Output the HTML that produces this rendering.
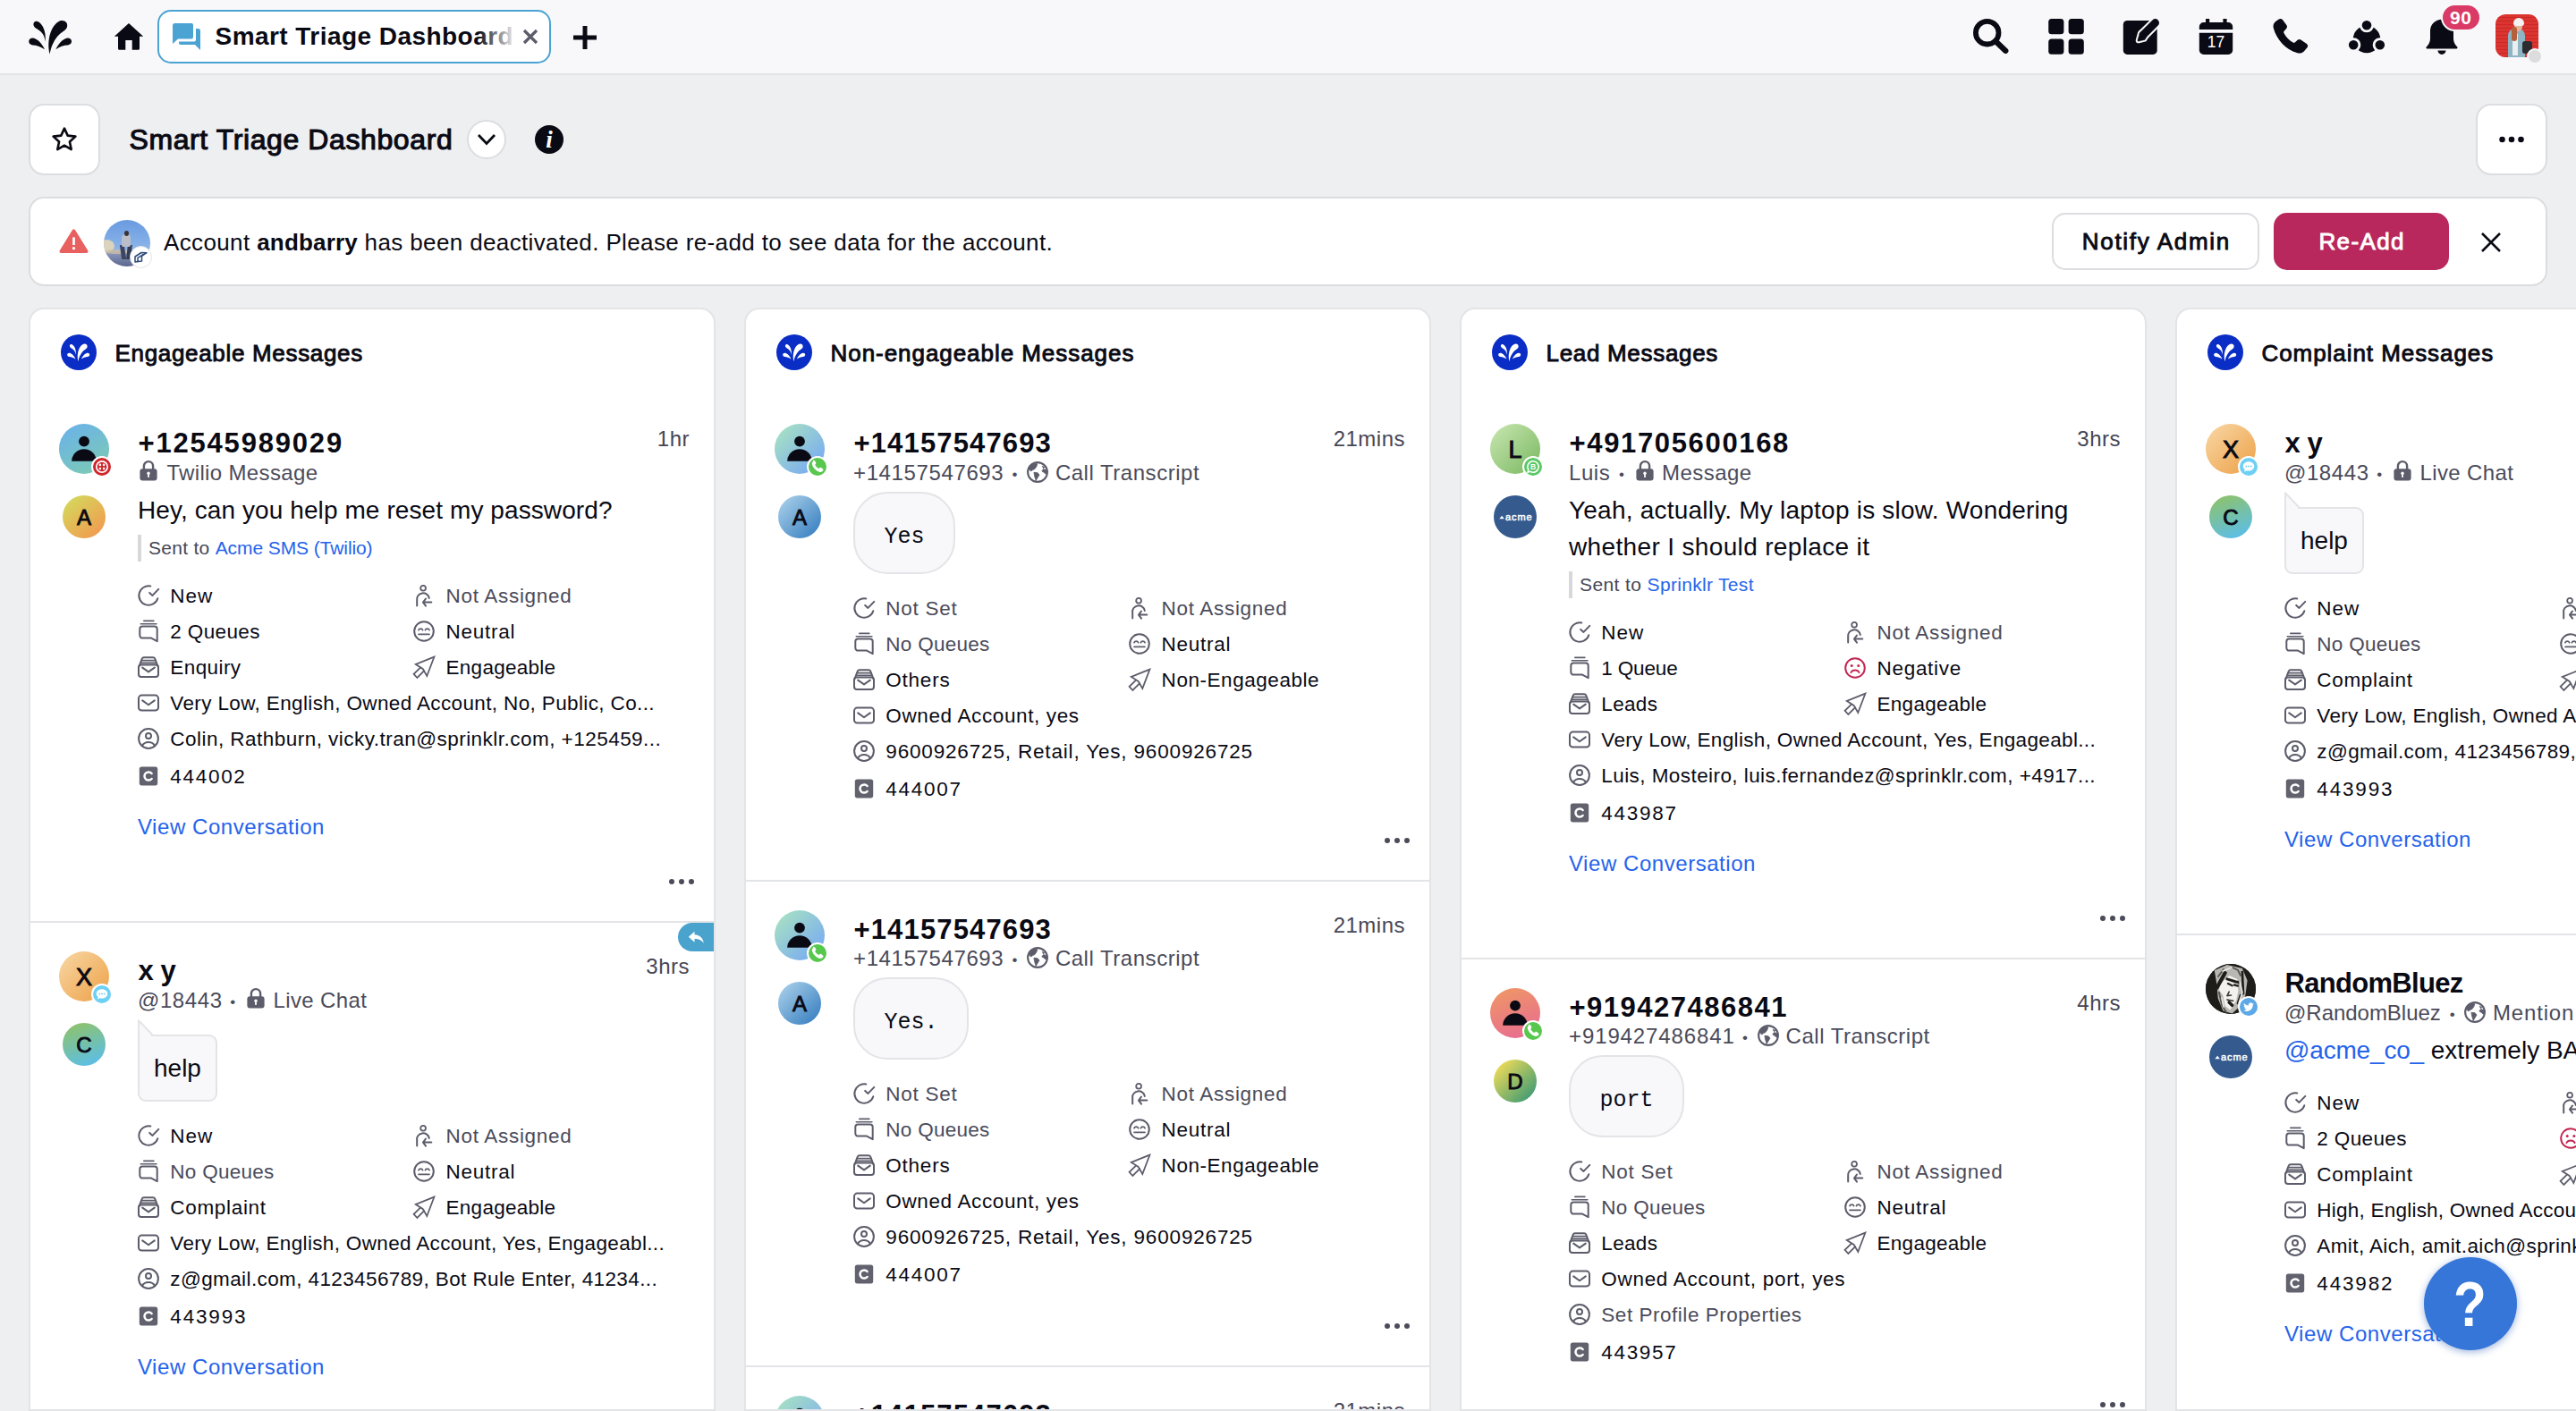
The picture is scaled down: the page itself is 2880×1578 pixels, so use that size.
<!DOCTYPE html>
<html lang="en"><head><meta charset="utf-8"><title>Smart Triage Dashboard</title>
<style>
*{box-sizing:border-box;margin:0;padding:0}
html,body{width:2880px;height:1578px;overflow:hidden}
body{position:relative;background:#eeeff1;font-family:"Liberation Sans",sans-serif;color:#0a0a14;-webkit-font-smoothing:antialiased}
svg{display:block;overflow:visible}
.abs{position:absolute}
#top{position:absolute;left:0;top:0;width:2880px;height:84px;background:#f8f8fa;border-bottom:2px solid #e3e4e7}
#tab{position:absolute;left:176px;top:11px;width:440px;height:60px;border:2px solid #4ba3d3;border-radius:15px;background:#fff}
#tab .t{position:absolute;left:62.5px;top:0;line-height:56px;font-size:28px;font-weight:bold;white-space:nowrap;width:336px;overflow:hidden;letter-spacing:.45px}
#tab .fade{position:absolute;left:356px;top:4px;width:42px;height:48px;background:linear-gradient(90deg,rgba(255,255,255,0),rgba(255,255,255,.95))}
.badge{position:absolute;left:2728.5px;top:3.5px;width:45.5px;height:31px;border-radius:15.5px;background:#d93a66;border:2px solid #f8f8fa;color:#fff;font-size:21px;font-weight:bold;text-align:center;line-height:27px;letter-spacing:.5px}
.sq{position:absolute;width:80px;height:80px;top:116px;background:#fff;border:2px solid #dcdde0;border-radius:17px}
#title{position:absolute;left:144.5px;top:134px;font-size:32px;line-height:44px;white-space:nowrap;-webkit-text-stroke:1.1px #0a0a14;letter-spacing:.6px}
#banner{position:absolute;left:32px;top:220px;width:2816px;height:100px;background:#fff;border:2px solid #dcdde0;border-radius:17px}
#banner .msg{position:absolute;left:149px;top:29px;font-size:26px;line-height:40px;white-space:nowrap;letter-spacing:.37px}
#banner .msg b{letter-spacing:.2px}
.btn{position:absolute;top:16px;height:64px;border-radius:15px;font-size:26px;text-align:center;line-height:60px;-webkit-text-stroke:.9px #0a0a14}
.col{position:absolute;top:344px;width:768px;height:1234px;background:#fff;border:2px solid #e3e4e7;border-radius:17px 17px 0 0;overflow:hidden}
.ch{position:relative;height:96px}
.ch .ic{position:absolute;left:34px;top:28px;width:40px;height:40px;border-radius:50%;background:#0a2dc6}
.ch .tt{position:absolute;left:94.5px;top:31px;font-size:26px;line-height:36px;-webkit-text-stroke:.9px #0a0a14;white-space:nowrap;letter-spacing:-.1px}
.m{position:relative;border-bottom:2px solid #e3e4e7;padding:36px 26px 0 120px}
.av{position:absolute;left:32px;top:32px;width:56px;height:56px;border-radius:50%}
.av b,.a2 b{display:block;text-align:center;font-weight:bold}
.av b{font-size:27px;line-height:59px;font-weight:normal;-webkit-text-stroke:1px #0a0a14}
.a2{position:absolute;left:36px;top:112px;width:48px;height:48px;border-radius:50%;overflow:hidden}
.a2 b{font-size:24px;line-height:49px;font-weight:normal;-webkit-text-stroke:.9px #0a0a14}
.bd{position:absolute;left:36px;top:36px;width:24px;height:24px;border-radius:50%;border:2px solid #fff}
.tm{position:absolute;right:27px;top:33px;font-size:24px;line-height:32px;color:#464655;white-space:nowrap;letter-spacing:.5px}
.nm{font-size:31px;margin-left:.5px;line-height:36px;font-weight:bold;white-space:nowrap;height:36px}
.sb{height:28px;margin-top:1px;font-size:24px;line-height:28px;color:#4b4b5a;white-space:nowrap;position:relative}
.sb span{position:absolute;top:0}
.sb svg{position:absolute}
.tx{margin-top:8px;font-size:28px;line-height:40px;white-space:nowrap}
.tx a,.st a,.vc{color:#2563eb}
.st{margin-top:7px;height:30px;border-left:4px solid #d8d8db;padding-left:8px;font-size:21px;line-height:30px;color:#464655;white-space:nowrap;letter-spacing:.5px}
.bb{margin-top:7px;height:92px;position:relative}
.bb .r{position:absolute;left:0;top:0;height:92px;border:2px solid #e3e4e7;background:#f8f8fa;border-radius:38px;padding:3px 32.5px 0;font-family:"Liberation Mono",monospace;font-size:25px;line-height:91.4px}
.bb .h{position:absolute;left:0;top:16.5px;height:75px;border:2px solid #e3e4e7;background:#f8f8fa;border-radius:0 9px 9px 9px;padding:0 16px;font-size:28px;line-height:71px}
.pr{margin-top:18px}
.rw{height:40px;position:relative}
.rw span{position:absolute;top:.5px;left:36.3px;font-size:22.5px;line-height:40px;white-space:nowrap}
.rw span.r{left:344.6px}
.rw svg{position:absolute;left:0;top:8px}
.rw svg.r{left:308px}
.g{color:#4b4b5a}
.vc{margin-top:20.5px;font-size:24px;line-height:32px;height:32px;letter-spacing:.55px}
.dt{position:absolute;right:22px;bottom:40.5px;width:28.5px;height:7px}
.dt i,.dt:before,.dt:after{content:"";position:absolute;top:0;width:6.5px;height:6.5px;border-radius:50%;background:#4b4b5a}
.dt i{left:11px}.dt:before{left:0}.dt:after{left:22px}
#help{position:absolute;left:2710px;top:1406px;width:104px;height:104px;border-radius:50%;background:#3576d8;box-shadow:0 2px 8px rgba(40,90,180,.45);color:#fff;font-size:70px;font-weight:bold;text-align:center;line-height:106px;padding-right:2px}
#help span{display:inline-block;transform:scaleX(.86)}
</style></head>
<body>
<div id="top"><svg style="position:absolute;left:31.8px;top:21.5px" width="48.4" height="38.5" viewBox="0 0 48.4 38.5"><path d="M23.7 38.5C20.5 27 23 9 33 2.500C38.500 -1 44.500 2.500 43 8.200C42 12 36.500 13.500 32 19C28 24 24.800 31 23.700 38.500zM18.600 24.800C18 16 13 12.500 9.300 10.300C5.500 8.500 4 4 7 2.200C10 .5 13.500 3.500 16 8C18.500 12.800 19.300 19 18.600 24.800zM18 33.200C13.500 29.800 8.500 28.600 4.500 28.400C.5 28-1 24 1.500 21.500C4 19.300 8 20.800 11 23.600C14 26.400 16.500 30 18 33.200zM30.400 33.200C34.500 29.800 39.500 28.600 43.800 28.400C47.800 28 49.300 24 46.800 21.500C44.300 19.300 40.300 20.800 37.300 23.600C34.300 26.400 31.800 30 30.400 33.200z" fill="#0a0a14"/></svg><svg class="abs" style="left:127px;top:25px" width="34" height="32" viewBox="0 0 34 32"><path d="M17 1.100L33.200 15.700H29v13.600a1.500 1.500 0 0 1-1.500 1.500H20.700V20.100H13.300V30.800H6.500A1.500 1.500 0 0 1 5 29.300V15.700H.8z" fill="#0a0a14"/></svg><div id="tab"><svg class="abs" style="left:15px;top:13px" width="31" height="30" viewBox="0 0 31 30"><path d="M2.500 0H21a2 2 0 0 1 2 2v13.500a2 2 0 0 1-2 2H6L0 23V2.500A2.500 2.500 0 0 1 2.500 0z" fill="#4ba3d3"/><path d="M26 6h2.500A2.500 2.500 0 0 1 31 8.500V30l-6-6H9a2 2 0 0 1-2-2v-1.500h17a2 2 0 0 0 2-2z" fill="#4ba3d3"/></svg><div class="t">Smart Triage Dashboard</div><div class="fade"></div><svg class="abs" style="left:406px;top:19px" width="18" height="18" viewBox="0 0 18 18"><path d="M2 2l14 14M16 2L2 16" stroke="#5c5c6b" stroke-width="3.200"/></svg></div><svg class="abs" style="left:640px;top:28px" width="28" height="28" viewBox="0 0 28 28"><path d="M14 1v26M1 14h26" stroke="#0a0a14" stroke-width="5"/></svg><svg class="abs" style="left:2206px;top:21px" width="40" height="40" viewBox="0 0 40 40"><circle cx="15.700" cy="15.700" r="12.800" fill="none" stroke="#0a0a14" stroke-width="5.800"/><path d="M25 25l11.200 10.700" stroke="#0a0a14" stroke-width="6.400" stroke-linecap="round"/></svg><svg class="abs" style="left:2290px;top:21px" width="40" height="40" viewBox="0 0 40 40" fill="#0a0a14"><rect x=".2" y="0" width="17.200" height="17.200" rx="3.500"/><rect x="22.600" y="0" width="17.200" height="17.200" rx="3.500"/><rect x=".2" y="22.500" width="17.200" height="17.300" rx="3.500"/><rect x="22.600" y="22.500" width="17.200" height="17.300" rx="3.500"/></svg><svg class="abs" style="left:2374px;top:20px" width="42" height="42" viewBox="0 0 42 42"><rect x="-.2" y="3" width="37.900" height="37.900" rx="4.500" fill="#0a0a14"/><path d="M35.600 5.500L22.500 18.600" fill="none" stroke="#f8f8fa" stroke-width="12.800" stroke-linecap="round"/><path d="M19.400 15.500l-1.300 1.700-2.200 7.800q-.2 1.400 1.300 1.100l6.800-1.700 1.600-2.700z" fill="#f8f8fa" stroke="#f8f8fa" stroke-width="4.400" stroke-linejoin="round"/><path d="M35.600 5.500L22.500 18.600" fill="none" stroke="#0a0a14" stroke-width="8.800" stroke-linecap="round"/><path d="M19.400 15.500l-1.300 1.700-2.200 7.800q-.2 1.400 1.300 1.100l6.800-1.700 1.600-2.700z" fill="#0a0a14" stroke="#0a0a14" stroke-width=".4" stroke-linejoin="round"/></svg><svg class="abs" style="left:2458px;top:21px" width="40" height="40" viewBox="0 0 40 40"><path d="M5.800 4h27.400a5 5 0 0 1 5 5v3H.8V9a5 5 0 0 1 5-5zM.8 15.800h37.400V35a5 5 0 0 1-5 5H5.800a5 5 0 0 1-5-5z" fill="#0a0a14"/><rect x="8" y="0" width="4.200" height="6" fill="#0a0a14"/><rect x="27.400" y="0" width="4.200" height="6" fill="#0a0a14"/><text x="19.600" y="32.200" font-family="Liberation Sans, sans-serif" font-size="17.500" fill="#fff" text-anchor="middle">17</text></svg><svg class="abs" style="left:2541px;top:20px" width="42.500" height="43.500" viewBox="0 0 41 42"><path d="M6.500 1.500c1.300-1 3-.8 4 .5l4.300 5.800c.9 1.200.8 2.800-.2 3.900l-2.300 2.500c-.6.600-.7 1.500-.3 2.300 2.300 4.300 5.600 7.700 9.800 10.100.8.400 1.700.3 2.300-.3l2.600-2.300c1.100-1 2.700-1 3.900-.2l6 4.200c1.400 1 1.600 2.900.5 4.200l-3.300 3.700c-1.800 2-4.600 2.800-7.200 2C13.300 33.800 3.900 23 .7 10.800c-.6-2.400.2-5 2.100-6.600z" fill="#0a0a14"/></svg><svg class="abs" style="left:2624px;top:20px" width="44" height="42" viewBox="0 0 44 42"><circle cx="22" cy="24" r="15.300" fill="#0a0a14"/><g fill="#0a0a14" stroke="#f8f8fa" stroke-width="2.800"><circle cx="22" cy="8.200" r="6.700"/><circle cx="7.200" cy="30.300" r="6.700"/><circle cx="36.800" cy="30.300" r="6.700"/></g></svg><svg class="abs" style="left:2712px;top:21px" width="36" height="41" viewBox="0 0 36 41"><path d="M18 .8c7.200 0 13 5.600 13 12.800v8.600c0 3.400 1.600 6.600 4.300 9.300.5.500.2 1.900-.9 1.900H1.600c-1.100 0-1.400-1.400-.9-1.900C3.400 28.800 5 25.600 5 22.200v-8.600C5 6.400 10.800.8 18 .8z" fill="#0a0a14"/><path d="M13.500 35.400h9a4.500 4.500 0 0 1-9 0z" fill="#0a0a14"/></svg><div class="badge">90</div><div class="abs" style="left:2790px;top:16px;width:48px;height:48px;border-radius:11px;overflow:hidden;background:repeating-linear-gradient(180deg,#dc352f 0 3px,#c9282a 3px 4px)"><div class="abs" style="left:14px;top:16px;width:19px;height:34px;border-radius:8px 8px 3px 3px;background:#8fb4c4"></div><div class="abs" style="left:19px;top:22px;width:6px;height:24px;background:#e9eef0"></div><div class="abs" style="left:30px;top:30px;width:11px;height:14px;border-radius:3px;background:#2b2b30"></div><div class="abs" style="left:21px;top:9px;width:9px;height:10px;border-radius:50%;background:#e3b39a"></div><div class="abs" style="left:20px;top:4px;width:12px;height:9px;border-radius:6px 6px 3px 3px;background:#f2f2f2"></div><div class="abs" style="left:18px;top:14px;width:6px;height:16px;border-radius:3px;background:#b5603a"></div></div><div class="abs" style="left:2825px;top:54px;width:18px;height:18px;border-radius:50%;background:#dcdcdc;border:2.500px solid #f8f8fa"></div></div>
<div class="sq" style="left:32px"><svg class="abs" style="left:23px;top:23px" width="30" height="30" viewBox="0 0 30 30"><path d="M15 2.600l3.700 8 8.700 1-6.500 5.900 1.800 8.600L15 21.700l-7.700 4.400 1.800-8.600L2.600 11.600l8.700-1z" fill="none" stroke="#0a0a14" stroke-width="2.600" stroke-linejoin="round"/></svg></div><div id="title">Smart Triage Dashboard</div><div class="abs" style="left:522px;top:134px;width:44px;height:44px;border-radius:50%;background:#fff;border:2px solid #dcdde0"><svg class="abs" style="left:9px;top:13px" width="22" height="14" viewBox="0 0 22 14"><path d="M2 2l9 9.500L20 2" fill="none" stroke="#0a0a14" stroke-width="2.800"/></svg></div><div class="abs" style="left:598px;top:140px;width:32px;height:32px;border-radius:50%;background:#0a0a14;color:#fff;font-family:'Liberation Serif',serif;font-style:italic;font-weight:bold;font-size:27px;line-height:32px;text-align:center">i</div><div class="sq" style="left:2768px"><svg class="abs" style="left:24px;top:34px" width="28" height="8" viewBox="0 0 28 8" fill="#0a0a14"><circle cx="3.500" cy="4" r="3.300"/><circle cx="14" cy="4" r="3.300"/><circle cx="24.500" cy="4" r="3.300"/></svg></div>
<div id="banner"><svg class="abs" style="left:32px;top:34px" width="33" height="27.400" viewBox="0 0 36 31" preserveAspectRatio="none"><path d="M18 2.500L33.500 28.500H2.500z" fill="#e8605f" stroke="#e8605f" stroke-width="4" stroke-linejoin="round"/><rect x="16.500" y="10.500" width="3" height="10" rx="1" fill="#fff"/><circle cx="18" cy="24.500" r="1.800" fill="#fff"/></svg><div class="abs" style="left:82px;top:24px;width:52px;height:52px;border-radius:50%;overflow:hidden;background:linear-gradient(180deg,#6a9be0 0,#84b0e8 50%,#90b4e4 62%,#8c98bc 70%,#5c668e 100%)"><div class="abs" style="left:-6px;top:22px;width:18px;height:14px;border-radius:50%;background:#ead9b4;opacity:.85"></div><div class="abs" style="left:0;top:33px;width:30px;height:5px;border-radius:50%;background:#cdbfa8;opacity:.8"></div><div class="abs" style="left:19px;top:28px;width:5px;height:16px;background:#3c4662;transform:skewX(8deg)"></div><div class="abs" style="left:26px;top:28px;width:5px;height:16px;background:#343d58;transform:skewX(-6deg)"></div><div class="abs" style="left:20px;top:16px;width:10px;height:14px;border-radius:4px 4px 2px 2px;background:#b9bec9"></div><div class="abs" style="left:22.500px;top:11.500px;width:5.500px;height:6.500px;border-radius:50%;background:#3a3434"></div></div><div class="abs" style="left:111px;top:53px;width:25px;height:25px;border-radius:50%;background:#fff;border:1px solid #e3e4e7"><svg class="abs" style="left:4px;top:5px" width="15" height="13" viewBox="0 0 15 13"><path d="M1 12V6l7-4.500 6 .2-5.500 3.600V11zM4 11.500V7.300l6.500-4" fill="none" stroke="#2d4a7a" stroke-width="1.500" stroke-linejoin="round"/></svg></div><div class="msg">Account <b>andbarry</b> has been deactivated. Please re-add to see data for the account.</div><div class="btn" style="left:2260px;width:232px;border:2px solid #dcdde0;background:#fff;letter-spacing:1.67px;text-indent:1.67px">Notify Admin</div><div class="btn" style="left:2508px;width:196px;background:#b8285c;color:#fff;line-height:64px;-webkit-text-stroke:.9px #fff;letter-spacing:1.39px;text-indent:1.39px">Re-Add</div><svg class="abs" style="left:2739px;top:37px" width="24" height="24" viewBox="0 0 24 24"><path d="M2 2l20 20M22 2L2 22" stroke="#0a0a14" stroke-width="2.600"/></svg></div>
<div class="col" style="left:32px"><div class="ch"><div class="ic"><svg style="position:absolute;left:7.300px;top:9.800px" width="25.4" height="20.2" viewBox="0 0 48.4 38.5"><path d="M23.7 38.5C20.5 27 23 9 33 2.500C38.500 -1 44.500 2.500 43 8.200C42 12 36.500 13.500 32 19C28 24 24.800 31 23.700 38.500zM18.600 24.800C18 16 13 12.500 9.300 10.300C5.500 8.500 4 4 7 2.200C10 .5 13.500 3.500 16 8C18.500 12.800 19.300 19 18.600 24.800zM18 33.200C13.500 29.800 8.500 28.600 4.500 28.400C.5 28-1 24 1.500 21.500C4 19.300 8 20.800 11 23.600C14 26.400 16.500 30 18 33.200zM30.400 33.200C34.500 29.800 39.500 28.600 43.800 28.400C47.800 28 49.300 24 46.800 21.500C44.300 19.300 40.300 20.800 37.300 23.600C34.300 26.400 31.800 30 30.400 33.200z" fill="#fff"/></svg></div><div class="tt" style="letter-spacing:0.68px">Engageable Messages</div></div>
<div class="m" style="height:590px"><div class="av" style="background:linear-gradient(150deg,#6bb3e6 10%,#7ccab6 90%)"><svg width="56" height="56" viewBox="0 0 56 56"><circle cx="28" cy="19.600" r="5.900" fill="#0a0a14"/><path d="M14.200 41.700a13.800 13.500 0 0 1 27.600 0z" fill="#0a0a14"/></svg><div class="bd" style="background:#cf272d"><svg width="20" height="20" viewBox="0 0 20 20"><circle cx="10" cy="10" r="6.200" fill="none" stroke="#fff" stroke-width="1.700"/><g fill="#fff"><circle cx="7.900" cy="7.900" r="1.300"/><circle cx="12.100" cy="7.900" r="1.300"/><circle cx="7.900" cy="12.100" r="1.300"/><circle cx="12.100" cy="12.100" r="1.300"/></g></svg></div></div><div class="a2" style="background:linear-gradient(140deg,#d4d85c 10%,#f29a50 90%)"><b>A</b></div><div class="tm">1hr</div><div class="nm"><span style="letter-spacing:1.81px;">+12545989029</span></div><div class="sb"><svg style="left:2.3px;top:0px" width="20" height="23" viewBox="0 0 20 23"><path d="M4.9 10V6.2a5.1 5.1 0 0 1 10.2 0V10" fill="none" stroke="#5c5c6b" stroke-width="2.4"/><rect x=".4" y="9.2" width="19.2" height="13.4" rx="3" fill="#5c5c6b"/><circle cx="10" cy="14.3" r="1.7" fill="#fff"/><rect x="9.1" y="14.5" width="1.8" height="4.4" fill="#fff"/></svg><span style="letter-spacing:0.35px;left:32.4px">Twilio Message</span></div><div class="tx"><span style="letter-spacing:0.09px;">Hey, can you help me reset my password?</span></div><div class="st"><span style="letter-spacing:0.29px">Sent to </span><a style="letter-spacing:-0.09px">Acme SMS (Twilio)</a></div><div class="pr"><div class="rw"><svg width="24" height="24" viewBox="0 0 24 24" fill="none" stroke="#5c5c6b" stroke-width="2" stroke-linecap="round" stroke-linejoin="round"><path d="M14.3 1.6A10.7 10.7 0 1 0 22.3 15.2"/><path d="M13.2 8.9l3.3 3 6.8-7"/></svg><span style="letter-spacing:0.93px;">New</span><svg class="r" width="24" height="24" viewBox="0 0 24 24" fill="none" stroke="#5c5c6b" stroke-width="2" stroke-linecap="round" stroke-linejoin="round"><g transform="translate(0 -.8)"><circle cx="11.1" cy="4.6" r="2.9" stroke-width="1.8"/><path d="M4.2 24.2v-6.600a6.800 6.400 0 0 1 13.600-1.900"/><path d="M20.300 20.400h-9M14 16.300l-3 4.100 3 4"/></g></svg><span class="r g" style="letter-spacing:0.68px;">Not Assigned</span></div><div class="rw"><svg width="24" height="24" viewBox="0 0 24 24" fill="none" stroke="#5c5c6b" stroke-width="2" stroke-linecap="round" stroke-linejoin="round"><path d="M6.8 .4h11.1M3.3 3.8h17.6" stroke-width="1.6"/><path d="M5.3 6.6h13.4a3 3 0 0 1 3 3v13.6l-6.6-3.6H5.3a3 3 0 0 1-3-3V9.6a3 3 0 0 1 3-3z"/></svg><span style="letter-spacing:0.36px;">2 Queues</span><svg class="r" width="24" height="24" viewBox="0 0 24 24" fill="none" stroke="#5c5c6b" stroke-width="2" stroke-linecap="round" stroke-linejoin="round"><circle cx="12" cy="12" r="10.8"/><path d="M6 10.6a2.4 2 0 0 1 4.6 0M13.4 10.6a2.4 2 0 0 1 4.6 0M6 15.3h12" stroke-width="1.7"/></svg><span class="r" style="letter-spacing:0.72px;">Neutral</span></div><div class="rw"><svg width="24" height="24" viewBox="0 0 24 24" fill="none" stroke="#5c5c6b" stroke-width="2" stroke-linecap="round" stroke-linejoin="round"><rect x="1" y="9.6" width="22" height="13.4" rx="3"/><path d="M5.2 12.6l6.8 4.8 6.8-4.8"/><path d="M1.6 11L4.6 3a2.6 2.6 0 0 1 2.4-1.7h10a2.6 2.6 0 0 1 2.4 1.7l3 8"/><path d="M4.3 4.6h15.4M3.2 7.3h17.6" stroke-width="1.7"/></svg><span style="letter-spacing:0.41px;">Enquiry</span><svg class="r" width="24" height="24" viewBox="0 0 24 24" fill="none" stroke="#5c5c6b" stroke-width="2" stroke-linecap="round" stroke-linejoin="round"><path d="M23.400.7L2.800 8.900l7.800 5 4.700 8.100z" stroke-width="1.8" stroke-linejoin="miter"/><path d="M8 12.7L.6 19.8l3.8 4.2 7.8-7.9" stroke-width="1.8" stroke-linejoin="miter"/></svg><span class="r" style="letter-spacing:0.25px;">Engageable</span></div><div class="rw"><svg width="24" height="24" viewBox="0 0 24 24" fill="none" stroke="#5c5c6b" stroke-width="2" stroke-linecap="round" stroke-linejoin="round"><rect x="1" y="3.6" width="22" height="17" rx="3.4"/><path d="M5.2 9.4l6.8 4.9 6.8-4.9"/></svg><span style="letter-spacing:0.37px;">Very Low, English, Owned Account, No, Public, Co...</span></div><div class="rw"><svg width="24" height="24" viewBox="0 0 24 24" fill="none" stroke="#5c5c6b" stroke-width="2" stroke-linecap="round" stroke-linejoin="round"><circle cx="12" cy="12" r="10.9"/><circle cx="12" cy="9" r="3"/><path d="M4.9 20a8 7.4 0 0 1 14.2 0"/></svg><span style="letter-spacing:0.47px;">Colin, Rathburn, vicky.tran@sprinklr.com, +125459...</span></div><div class="rw" style="margin-top:2px"><svg width="24" height="24" viewBox="0 0 24 24" fill="none" stroke="#5c5c6b" stroke-width="2" stroke-linecap="round" stroke-linejoin="round"><rect x="1.8" y="1.6" width="20.4" height="20.8" rx="2.6" fill="#62626f" stroke="none"/><path d="M15.6 9a4.6 4.6 0 1 0 0 6" stroke="#fff" stroke-width="2.5"/></svg><span style="letter-spacing:1.7px;">444002</span></div></div><div class="vc">View Conversation</div><div class="dt"><i></i></div></div>
<div class="m" style="height:604px"><div class="abs" style="right:0;top:0;width:40px;height:32px;border-radius:16px 0 0 16px;background:#4aa3cd"><svg class="abs" style="left:11px;top:9px" width="19" height="15" viewBox="0 0 19 15"><path d="M7.500 .8L.8 6.800l6.700 6V9c4.500 0 7.700 1.200 10.300 4.800C17 8.500 13.800 4.800 7.500 4.300z" fill="#fff"/></svg></div><div class="av" style="background:linear-gradient(135deg,#f7d29c 10%,#eea650 90%)"><b>X</b><div class="bd" style="background:#6fd0f5"><svg width="20" height="20" viewBox="0 0 20 20"><path d="M10 4.300c3.500 0 6.200 2.300 6.200 5.100s-2.700 5.100-6.200 5.100c-.7 0-1.400-.1-2-.3l-3 1.400.8-2.700c-1.200-.9-2-2.100-2-3.500 0-2.800 2.700-5.100 6.200-5.100z" fill="#fff"/><g fill="#6fd0f5"><circle cx="7.300" cy="9.500" r=".9"/><circle cx="10" cy="9.500" r=".9"/><circle cx="12.700" cy="9.500" r=".9"/></g></svg></div></div><div class="a2" style="background:linear-gradient(160deg,#8cc270 10%,#5cbee6 90%)"><b>C</b></div><div class="tm">3hrs</div><div class="nm"><span style="letter-spacing:-0.41px;">x y</span></div><div class="sb"><span style="letter-spacing:0.58px;left:0px">@18443</span><span style="left:103.2px;top:1.900px;font-size:17px">•</span><svg style="left:122.3px;top:0px" width="20" height="23" viewBox="0 0 20 23"><path d="M4.9 10V6.2a5.1 5.1 0 0 1 10.2 0V10" fill="none" stroke="#5c5c6b" stroke-width="2.4"/><rect x=".4" y="9.2" width="19.2" height="13.4" rx="3" fill="#5c5c6b"/><circle cx="10" cy="14.3" r="1.7" fill="#fff"/><rect x="9.1" y="14.5" width="1.8" height="4.4" fill="#fff"/></svg><span style="letter-spacing:0.37px;left:151.5px">Live Chat</span></div><div class="bb"><svg class="abs" style="left:0;top:0" width="20" height="24" viewBox="0 0 20 24"><path d="M1 24V1.300L16.500 17.500" fill="#f8f8fa" stroke="#e3e4e7" stroke-width="2" stroke-linejoin="round"/></svg><div class="h">help</div><div class="abs" style="left:2px;top:16.500px;width:12.500px;height:3px;background:#f8f8fa"></div></div><div class="pr"><div class="rw"><svg width="24" height="24" viewBox="0 0 24 24" fill="none" stroke="#5c5c6b" stroke-width="2" stroke-linecap="round" stroke-linejoin="round"><path d="M14.3 1.6A10.7 10.7 0 1 0 22.3 15.2"/><path d="M13.2 8.9l3.3 3 6.8-7"/></svg><span style="letter-spacing:0.93px;">New</span><svg class="r" width="24" height="24" viewBox="0 0 24 24" fill="none" stroke="#5c5c6b" stroke-width="2" stroke-linecap="round" stroke-linejoin="round"><g transform="translate(0 -.8)"><circle cx="11.1" cy="4.6" r="2.9" stroke-width="1.8"/><path d="M4.2 24.2v-6.600a6.800 6.400 0 0 1 13.600-1.900"/><path d="M20.300 20.400h-9M14 16.300l-3 4.100 3 4"/></g></svg><span class="r g" style="letter-spacing:0.68px;">Not Assigned</span></div><div class="rw"><svg width="24" height="24" viewBox="0 0 24 24" fill="none" stroke="#5c5c6b" stroke-width="2" stroke-linecap="round" stroke-linejoin="round"><path d="M6.8 .4h11.1M3.3 3.8h17.6" stroke-width="1.6"/><path d="M5.3 6.6h13.4a3 3 0 0 1 3 3v13.6l-6.6-3.6H5.3a3 3 0 0 1-3-3V9.6a3 3 0 0 1 3-3z"/></svg><span class="g" style="letter-spacing:0.28px;">No Queues</span><svg class="r" width="24" height="24" viewBox="0 0 24 24" fill="none" stroke="#5c5c6b" stroke-width="2" stroke-linecap="round" stroke-linejoin="round"><circle cx="12" cy="12" r="10.8"/><path d="M6 10.6a2.4 2 0 0 1 4.6 0M13.4 10.6a2.4 2 0 0 1 4.6 0M6 15.3h12" stroke-width="1.7"/></svg><span class="r" style="letter-spacing:0.72px;">Neutral</span></div><div class="rw"><svg width="24" height="24" viewBox="0 0 24 24" fill="none" stroke="#5c5c6b" stroke-width="2" stroke-linecap="round" stroke-linejoin="round"><rect x="1" y="9.6" width="22" height="13.4" rx="3"/><path d="M5.2 12.6l6.8 4.8 6.8-4.8"/><path d="M1.6 11L4.6 3a2.6 2.6 0 0 1 2.4-1.7h10a2.6 2.6 0 0 1 2.4 1.7l3 8"/><path d="M4.3 4.6h15.4M3.2 7.3h17.6" stroke-width="1.7"/></svg><span style="letter-spacing:0.68px;">Complaint</span><svg class="r" width="24" height="24" viewBox="0 0 24 24" fill="none" stroke="#5c5c6b" stroke-width="2" stroke-linecap="round" stroke-linejoin="round"><path d="M23.400.7L2.800 8.900l7.800 5 4.700 8.100z" stroke-width="1.8" stroke-linejoin="miter"/><path d="M8 12.7L.6 19.8l3.8 4.2 7.8-7.9" stroke-width="1.8" stroke-linejoin="miter"/></svg><span class="r" style="letter-spacing:0.25px;">Engageable</span></div><div class="rw"><svg width="24" height="24" viewBox="0 0 24 24" fill="none" stroke="#5c5c6b" stroke-width="2" stroke-linecap="round" stroke-linejoin="round"><rect x="1" y="3.6" width="22" height="17" rx="3.4"/><path d="M5.2 9.4l6.8 4.9 6.8-4.9"/></svg><span style="letter-spacing:0.34px;">Very Low, English, Owned Account, Yes, Engageabl...</span></div><div class="rw"><svg width="24" height="24" viewBox="0 0 24 24" fill="none" stroke="#5c5c6b" stroke-width="2" stroke-linecap="round" stroke-linejoin="round"><circle cx="12" cy="12" r="10.9"/><circle cx="12" cy="9" r="3"/><path d="M4.9 20a8 7.4 0 0 1 14.2 0"/></svg><span style="letter-spacing:0.39px;">z@gmail.com, 4123456789, Bot Rule Enter, 41234...</span></div><div class="rw" style="margin-top:2px"><svg width="24" height="24" viewBox="0 0 24 24" fill="none" stroke="#5c5c6b" stroke-width="2" stroke-linecap="round" stroke-linejoin="round"><rect x="1.8" y="1.6" width="20.4" height="20.8" rx="2.6" fill="#62626f" stroke="none"/><path d="M15.6 9a4.6 4.6 0 1 0 0 6" stroke="#fff" stroke-width="2.5"/></svg><span style="letter-spacing:1.82px;">443993</span></div></div><div class="vc">View Conversation</div><div class="dt"><i></i></div></div>
</div>
<div class="col" style="left:832px"><div class="ch"><div class="ic"><svg style="position:absolute;left:7.300px;top:9.800px" width="25.4" height="20.2" viewBox="0 0 48.4 38.5"><path d="M23.7 38.5C20.5 27 23 9 33 2.500C38.500 -1 44.500 2.500 43 8.200C42 12 36.500 13.500 32 19C28 24 24.800 31 23.700 38.500zM18.600 24.800C18 16 13 12.500 9.300 10.300C5.500 8.500 4 4 7 2.200C10 .5 13.500 3.500 16 8C18.500 12.800 19.300 19 18.600 24.800zM18 33.200C13.500 29.800 8.500 28.600 4.500 28.400C.5 28-1 24 1.500 21.500C4 19.300 8 20.800 11 23.600C14 26.400 16.500 30 18 33.200zM30.400 33.200C34.500 29.800 39.500 28.600 43.800 28.400C47.800 28 49.300 24 46.800 21.500C44.300 19.300 40.300 20.800 37.300 23.600C34.300 26.400 31.800 30 30.400 33.200z" fill="#fff"/></svg></div><div class="tt" style="letter-spacing:0.95px">Non-engageable Messages</div></div>
<div class="m" style="height:544px"><div class="av" style="background:linear-gradient(135deg,#a6e0c4 10%,#78aaf2 90%)"><svg width="56" height="56" viewBox="0 0 56 56"><circle cx="28" cy="19.600" r="5.900" fill="#0a0a14"/><path d="M14.200 41.700a13.800 13.500 0 0 1 27.600 0z" fill="#0a0a14"/></svg><div class="bd" style="background:#58c74e"><svg width="20" height="20" viewBox="0 0 20 20"><path d="M6.300 3.600c.6-.5 1.400-.4 1.800.2l1.300 1.900c.4.500.3 1.200-.1 1.700l-.8.900c1 2 2.300 3.300 4.200 4.300l1-.8c.5-.4 1.200-.5 1.700-.1l1.900 1.300c.6.400.7 1.300.2 1.800l-1 1.100c-.7.700-1.700 1-2.700.7-4.200-1.300-7.300-4.500-8.600-8.600-.3-1 0-2 .7-2.700z" fill="#fff" transform="translate(-1.300 -.6)"/></svg></div></div><div class="a2" style="background:linear-gradient(135deg,#a4cce8 10%,#3c82c2 90%)"><b>A</b></div><div class="tm">21mins</div><div class="nm"><span style="letter-spacing:1.14px;">+14157547693</span></div><div class="sb"><span style="letter-spacing:0.62px;left:0px">+14157547693</span><span style="left:177.6px;top:1.900px;font-size:17px">•</span><svg style="left:193.7px;top:1px" width="24" height="24" viewBox="0 0 24 24"><circle cx="12" cy="12" r="10.900" fill="#fff" stroke="#5c5c6b" stroke-width="2.100"/><path d="M2.300 8.600L4.700 4.400 8.400 2.400l3.400.4-1 3-2 2.800-2.300 1-1.800 1.400zM7.900 12.300l4.200.5 1.900 2.300-2.400 3.800-1.400 2.500-1.400-4.400zM16.800 10.900l1.800-2.300 2.800.9 1.500 1.900-1.500 2.800-2.300-1.900zM17.300 5.300l2.300 1.100-1 1.500z" fill="#5c5c6b" stroke="#5c5c6b" stroke-width=".8" stroke-linejoin="round"/></svg><span style="letter-spacing:0.52px;left:225.9px">Call Transcript</span></div><div class="bb"><div class="r">Yes</div></div><div class="pr"><div class="rw"><svg width="24" height="24" viewBox="0 0 24 24" fill="none" stroke="#5c5c6b" stroke-width="2" stroke-linecap="round" stroke-linejoin="round"><path d="M14.3 1.6A10.7 10.7 0 1 0 22.3 15.2"/><path d="M13.2 8.9l3.3 3 6.8-7"/></svg><span class="g" style="letter-spacing:0.74px;">Not Set</span><svg class="r" width="24" height="24" viewBox="0 0 24 24" fill="none" stroke="#5c5c6b" stroke-width="2" stroke-linecap="round" stroke-linejoin="round"><g transform="translate(0 -.8)"><circle cx="11.1" cy="4.6" r="2.9" stroke-width="1.8"/><path d="M4.2 24.2v-6.600a6.800 6.400 0 0 1 13.600-1.900"/><path d="M20.300 20.400h-9M14 16.300l-3 4.100 3 4"/></g></svg><span class="r g" style="letter-spacing:0.68px;">Not Assigned</span></div><div class="rw"><svg width="24" height="24" viewBox="0 0 24 24" fill="none" stroke="#5c5c6b" stroke-width="2" stroke-linecap="round" stroke-linejoin="round"><path d="M6.8 .4h11.1M3.3 3.8h17.6" stroke-width="1.6"/><path d="M5.3 6.6h13.4a3 3 0 0 1 3 3v13.6l-6.6-3.6H5.3a3 3 0 0 1-3-3V9.6a3 3 0 0 1 3-3z"/></svg><span class="g" style="letter-spacing:0.28px;">No Queues</span><svg class="r" width="24" height="24" viewBox="0 0 24 24" fill="none" stroke="#5c5c6b" stroke-width="2" stroke-linecap="round" stroke-linejoin="round"><circle cx="12" cy="12" r="10.8"/><path d="M6 10.6a2.4 2 0 0 1 4.6 0M13.4 10.6a2.4 2 0 0 1 4.6 0M6 15.3h12" stroke-width="1.7"/></svg><span class="r" style="letter-spacing:0.72px;">Neutral</span></div><div class="rw"><svg width="24" height="24" viewBox="0 0 24 24" fill="none" stroke="#5c5c6b" stroke-width="2" stroke-linecap="round" stroke-linejoin="round"><rect x="1" y="9.6" width="22" height="13.4" rx="3"/><path d="M5.2 12.6l6.8 4.8 6.8-4.8"/><path d="M1.6 11L4.6 3a2.6 2.6 0 0 1 2.4-1.7h10a2.6 2.6 0 0 1 2.4 1.7l3 8"/><path d="M4.3 4.6h15.4M3.2 7.3h17.6" stroke-width="1.7"/></svg><span style="letter-spacing:0.77px;">Others</span><svg class="r" width="24" height="24" viewBox="0 0 24 24" fill="none" stroke="#5c5c6b" stroke-width="2" stroke-linecap="round" stroke-linejoin="round"><path d="M23.400.7L2.800 8.900l7.800 5 4.700 8.100z" stroke-width="1.8" stroke-linejoin="miter"/><path d="M8 12.7L.6 19.8l3.8 4.2 7.8-7.9" stroke-width="1.8" stroke-linejoin="miter"/></svg><span class="r" style="letter-spacing:0.55px;">Non-Engageable</span></div><div class="rw"><svg width="24" height="24" viewBox="0 0 24 24" fill="none" stroke="#5c5c6b" stroke-width="2" stroke-linecap="round" stroke-linejoin="round"><rect x="1" y="3.6" width="22" height="17" rx="3.4"/><path d="M5.2 9.4l6.8 4.9 6.8-4.9"/></svg><span style="letter-spacing:0.63px;">Owned Account, yes</span></div><div class="rw"><svg width="24" height="24" viewBox="0 0 24 24" fill="none" stroke="#5c5c6b" stroke-width="2" stroke-linecap="round" stroke-linejoin="round"><circle cx="12" cy="12" r="10.9"/><circle cx="12" cy="9" r="3"/><path d="M4.9 20a8 7.4 0 0 1 14.2 0"/></svg><span style="letter-spacing:0.83px;">9600926725, Retail, Yes, 9600926725</span></div><div class="rw" style="margin-top:2px"><svg width="24" height="24" viewBox="0 0 24 24" fill="none" stroke="#5c5c6b" stroke-width="2" stroke-linecap="round" stroke-linejoin="round"><rect x="1.8" y="1.6" width="20.4" height="20.8" rx="2.6" fill="#62626f" stroke="none"/><path d="M15.6 9a4.6 4.6 0 1 0 0 6" stroke="#fff" stroke-width="2.5"/></svg><span style="letter-spacing:1.74px;">444007</span></div></div><div class="dt"><i></i></div></div>
<div class="m" style="height:543px"><div class="av" style="background:linear-gradient(135deg,#a6e0c4 10%,#78aaf2 90%)"><svg width="56" height="56" viewBox="0 0 56 56"><circle cx="28" cy="19.600" r="5.900" fill="#0a0a14"/><path d="M14.200 41.700a13.800 13.500 0 0 1 27.600 0z" fill="#0a0a14"/></svg><div class="bd" style="background:#58c74e"><svg width="20" height="20" viewBox="0 0 20 20"><path d="M6.300 3.600c.6-.5 1.400-.4 1.800.2l1.300 1.900c.4.500.3 1.200-.1 1.700l-.8.900c1 2 2.300 3.300 4.200 4.300l1-.8c.5-.4 1.200-.5 1.700-.1l1.900 1.300c.6.400.7 1.300.2 1.800l-1 1.100c-.7.700-1.700 1-2.700.7-4.200-1.300-7.300-4.500-8.600-8.600-.3-1 0-2 .7-2.700z" fill="#fff" transform="translate(-1.300 -.6)"/></svg></div></div><div class="a2" style="background:linear-gradient(135deg,#a4cce8 10%,#3c82c2 90%)"><b>A</b></div><div class="tm">21mins</div><div class="nm"><span style="letter-spacing:1.14px;">+14157547693</span></div><div class="sb" style="margin-top:0px"><span style="letter-spacing:0.62px;left:0px">+14157547693</span><span style="left:177.6px;top:1.900px;font-size:17px">•</span><svg style="left:193.7px;top:1px" width="24" height="24" viewBox="0 0 24 24"><circle cx="12" cy="12" r="10.900" fill="#fff" stroke="#5c5c6b" stroke-width="2.100"/><path d="M2.300 8.600L4.700 4.400 8.400 2.400l3.400.4-1 3-2 2.800-2.300 1-1.800 1.400zM7.900 12.300l4.200.5 1.900 2.300-2.400 3.800-1.400 2.500-1.400-4.400zM16.800 10.900l1.800-2.300 2.800.9 1.500 1.900-1.500 2.800-2.300-1.900zM17.300 5.300l2.300 1.100-1 1.500z" fill="#5c5c6b" stroke="#5c5c6b" stroke-width=".8" stroke-linejoin="round"/></svg><span style="letter-spacing:0.52px;left:225.9px">Call Transcript</span></div><div class="bb"><div class="r">Yes.</div></div><div class="pr"><div class="rw"><svg width="24" height="24" viewBox="0 0 24 24" fill="none" stroke="#5c5c6b" stroke-width="2" stroke-linecap="round" stroke-linejoin="round"><path d="M14.3 1.6A10.7 10.7 0 1 0 22.3 15.2"/><path d="M13.2 8.9l3.3 3 6.8-7"/></svg><span class="g" style="letter-spacing:0.74px;">Not Set</span><svg class="r" width="24" height="24" viewBox="0 0 24 24" fill="none" stroke="#5c5c6b" stroke-width="2" stroke-linecap="round" stroke-linejoin="round"><g transform="translate(0 -.8)"><circle cx="11.1" cy="4.6" r="2.9" stroke-width="1.8"/><path d="M4.2 24.2v-6.600a6.800 6.400 0 0 1 13.600-1.900"/><path d="M20.300 20.400h-9M14 16.300l-3 4.100 3 4"/></g></svg><span class="r g" style="letter-spacing:0.68px;">Not Assigned</span></div><div class="rw"><svg width="24" height="24" viewBox="0 0 24 24" fill="none" stroke="#5c5c6b" stroke-width="2" stroke-linecap="round" stroke-linejoin="round"><path d="M6.8 .4h11.1M3.3 3.8h17.6" stroke-width="1.6"/><path d="M5.3 6.6h13.4a3 3 0 0 1 3 3v13.6l-6.6-3.6H5.3a3 3 0 0 1-3-3V9.6a3 3 0 0 1 3-3z"/></svg><span class="g" style="letter-spacing:0.28px;">No Queues</span><svg class="r" width="24" height="24" viewBox="0 0 24 24" fill="none" stroke="#5c5c6b" stroke-width="2" stroke-linecap="round" stroke-linejoin="round"><circle cx="12" cy="12" r="10.8"/><path d="M6 10.6a2.4 2 0 0 1 4.6 0M13.4 10.6a2.4 2 0 0 1 4.6 0M6 15.3h12" stroke-width="1.7"/></svg><span class="r" style="letter-spacing:0.72px;">Neutral</span></div><div class="rw"><svg width="24" height="24" viewBox="0 0 24 24" fill="none" stroke="#5c5c6b" stroke-width="2" stroke-linecap="round" stroke-linejoin="round"><rect x="1" y="9.6" width="22" height="13.4" rx="3"/><path d="M5.2 12.6l6.8 4.8 6.8-4.8"/><path d="M1.6 11L4.6 3a2.6 2.6 0 0 1 2.4-1.7h10a2.6 2.6 0 0 1 2.4 1.7l3 8"/><path d="M4.3 4.6h15.4M3.2 7.3h17.6" stroke-width="1.7"/></svg><span style="letter-spacing:0.77px;">Others</span><svg class="r" width="24" height="24" viewBox="0 0 24 24" fill="none" stroke="#5c5c6b" stroke-width="2" stroke-linecap="round" stroke-linejoin="round"><path d="M23.400.7L2.800 8.900l7.800 5 4.700 8.100z" stroke-width="1.8" stroke-linejoin="miter"/><path d="M8 12.7L.6 19.8l3.8 4.2 7.8-7.9" stroke-width="1.8" stroke-linejoin="miter"/></svg><span class="r" style="letter-spacing:0.55px;">Non-Engageable</span></div><div class="rw"><svg width="24" height="24" viewBox="0 0 24 24" fill="none" stroke="#5c5c6b" stroke-width="2" stroke-linecap="round" stroke-linejoin="round"><rect x="1" y="3.6" width="22" height="17" rx="3.4"/><path d="M5.2 9.4l6.8 4.9 6.8-4.9"/></svg><span style="letter-spacing:0.63px;">Owned Account, yes</span></div><div class="rw"><svg width="24" height="24" viewBox="0 0 24 24" fill="none" stroke="#5c5c6b" stroke-width="2" stroke-linecap="round" stroke-linejoin="round"><circle cx="12" cy="12" r="10.9"/><circle cx="12" cy="9" r="3"/><path d="M4.9 20a8 7.4 0 0 1 14.2 0"/></svg><span style="letter-spacing:0.83px;">9600926725, Retail, Yes, 9600926725</span></div><div class="rw" style="margin-top:2px"><svg width="24" height="24" viewBox="0 0 24 24" fill="none" stroke="#5c5c6b" stroke-width="2" stroke-linecap="round" stroke-linejoin="round"><rect x="1.8" y="1.6" width="20.4" height="20.8" rx="2.6" fill="#62626f" stroke="none"/><path d="M15.6 9a4.6 4.6 0 1 0 0 6" stroke="#fff" stroke-width="2.5"/></svg><span style="letter-spacing:1.74px;">444007</span></div></div><div class="dt"><i></i></div></div>
<div class="m" style="height:544px"><div class="av" style="background:linear-gradient(135deg,#a6e0c4 10%,#78aaf2 90%)"><svg width="56" height="56" viewBox="0 0 56 56"><circle cx="28" cy="19.600" r="5.900" fill="#0a0a14"/><path d="M14.200 41.700a13.800 13.500 0 0 1 27.600 0z" fill="#0a0a14"/></svg><div class="bd" style="background:#58c74e"><svg width="20" height="20" viewBox="0 0 20 20"><path d="M6.300 3.600c.6-.5 1.400-.4 1.800.2l1.300 1.900c.4.500.3 1.200-.1 1.700l-.8.900c1 2 2.300 3.300 4.200 4.300l1-.8c.5-.4 1.200-.5 1.700-.1l1.900 1.300c.6.400.7 1.300.2 1.800l-1 1.100c-.7.700-1.700 1-2.700.7-4.200-1.300-7.300-4.500-8.600-8.600-.3-1 0-2 .7-2.700z" fill="#fff" transform="translate(-1.300 -.6)"/></svg></div></div><div class="a2" style="background:linear-gradient(135deg,#a4cce8 10%,#3c82c2 90%)"><b>A</b></div><div class="tm">21mins</div><div class="nm"><span style="letter-spacing:1.14px;">+14157547693</span></div><div class="sb"><span style="letter-spacing:0.62px;left:0px">+14157547693</span><span style="left:177.6px;top:1.900px;font-size:17px">•</span><svg style="left:193.7px;top:1px" width="24" height="24" viewBox="0 0 24 24"><circle cx="12" cy="12" r="10.900" fill="#fff" stroke="#5c5c6b" stroke-width="2.100"/><path d="M2.300 8.600L4.700 4.400 8.400 2.400l3.400.4-1 3-2 2.800-2.300 1-1.800 1.400zM7.900 12.300l4.200.5 1.900 2.300-2.400 3.800-1.400 2.500-1.400-4.400zM16.800 10.900l1.800-2.300 2.800.9 1.500 1.900-1.500 2.800-2.300-1.900zM17.300 5.300l2.300 1.100-1 1.500z" fill="#5c5c6b" stroke="#5c5c6b" stroke-width=".8" stroke-linejoin="round"/></svg><span style="letter-spacing:0.52px;left:225.9px">Call Transcript</span></div><div class="bb"><div class="r">Yes</div></div><div class="pr"><div class="rw"><svg width="24" height="24" viewBox="0 0 24 24" fill="none" stroke="#5c5c6b" stroke-width="2" stroke-linecap="round" stroke-linejoin="round"><path d="M14.3 1.6A10.7 10.7 0 1 0 22.3 15.2"/><path d="M13.2 8.9l3.3 3 6.8-7"/></svg><span class="g" style="letter-spacing:0.74px;">Not Set</span><svg class="r" width="24" height="24" viewBox="0 0 24 24" fill="none" stroke="#5c5c6b" stroke-width="2" stroke-linecap="round" stroke-linejoin="round"><g transform="translate(0 -.8)"><circle cx="11.1" cy="4.6" r="2.9" stroke-width="1.8"/><path d="M4.2 24.2v-6.600a6.800 6.400 0 0 1 13.600-1.900"/><path d="M20.300 20.400h-9M14 16.300l-3 4.100 3 4"/></g></svg><span class="r g" style="letter-spacing:0.68px;">Not Assigned</span></div><div class="rw"><svg width="24" height="24" viewBox="0 0 24 24" fill="none" stroke="#5c5c6b" stroke-width="2" stroke-linecap="round" stroke-linejoin="round"><path d="M6.8 .4h11.1M3.3 3.8h17.6" stroke-width="1.6"/><path d="M5.3 6.6h13.4a3 3 0 0 1 3 3v13.6l-6.6-3.6H5.3a3 3 0 0 1-3-3V9.6a3 3 0 0 1 3-3z"/></svg><span class="g" style="letter-spacing:0.28px;">No Queues</span><svg class="r" width="24" height="24" viewBox="0 0 24 24" fill="none" stroke="#5c5c6b" stroke-width="2" stroke-linecap="round" stroke-linejoin="round"><circle cx="12" cy="12" r="10.8"/><path d="M6 10.6a2.4 2 0 0 1 4.6 0M13.4 10.6a2.4 2 0 0 1 4.6 0M6 15.3h12" stroke-width="1.7"/></svg><span class="r" style="letter-spacing:0.72px;">Neutral</span></div><div class="rw"><svg width="24" height="24" viewBox="0 0 24 24" fill="none" stroke="#5c5c6b" stroke-width="2" stroke-linecap="round" stroke-linejoin="round"><rect x="1" y="9.6" width="22" height="13.4" rx="3"/><path d="M5.2 12.6l6.8 4.8 6.8-4.8"/><path d="M1.6 11L4.6 3a2.6 2.6 0 0 1 2.4-1.7h10a2.6 2.6 0 0 1 2.4 1.7l3 8"/><path d="M4.3 4.6h15.4M3.2 7.3h17.6" stroke-width="1.7"/></svg><span style="letter-spacing:0.77px;">Others</span><svg class="r" width="24" height="24" viewBox="0 0 24 24" fill="none" stroke="#5c5c6b" stroke-width="2" stroke-linecap="round" stroke-linejoin="round"><path d="M23.400.7L2.800 8.900l7.800 5 4.700 8.100z" stroke-width="1.8" stroke-linejoin="miter"/><path d="M8 12.7L.6 19.8l3.8 4.2 7.8-7.9" stroke-width="1.8" stroke-linejoin="miter"/></svg><span class="r" style="letter-spacing:0.55px;">Non-Engageable</span></div><div class="rw"><svg width="24" height="24" viewBox="0 0 24 24" fill="none" stroke="#5c5c6b" stroke-width="2" stroke-linecap="round" stroke-linejoin="round"><rect x="1" y="3.6" width="22" height="17" rx="3.4"/><path d="M5.2 9.4l6.8 4.9 6.8-4.9"/></svg><span style="letter-spacing:0.63px;">Owned Account, yes</span></div><div class="rw"><svg width="24" height="24" viewBox="0 0 24 24" fill="none" stroke="#5c5c6b" stroke-width="2" stroke-linecap="round" stroke-linejoin="round"><circle cx="12" cy="12" r="10.9"/><circle cx="12" cy="9" r="3"/><path d="M4.9 20a8 7.4 0 0 1 14.2 0"/></svg><span style="letter-spacing:0.83px;">9600926725, Retail, Yes, 9600926725</span></div><div class="rw" style="margin-top:2px"><svg width="24" height="24" viewBox="0 0 24 24" fill="none" stroke="#5c5c6b" stroke-width="2" stroke-linecap="round" stroke-linejoin="round"><rect x="1.8" y="1.6" width="20.4" height="20.8" rx="2.6" fill="#62626f" stroke="none"/><path d="M15.6 9a4.6 4.6 0 1 0 0 6" stroke="#fff" stroke-width="2.5"/></svg><span style="letter-spacing:1.74px;">444007</span></div></div><div class="dt"><i></i></div></div>
</div>
<div class="col" style="left:1632px"><div class="ch"><div class="ic"><svg style="position:absolute;left:7.300px;top:9.800px" width="25.4" height="20.2" viewBox="0 0 48.4 38.5"><path d="M23.7 38.5C20.5 27 23 9 33 2.500C38.500 -1 44.500 2.500 43 8.200C42 12 36.500 13.500 32 19C28 24 24.800 31 23.700 38.500zM18.600 24.800C18 16 13 12.500 9.300 10.300C5.500 8.500 4 4 7 2.200C10 .5 13.500 3.500 16 8C18.500 12.800 19.300 19 18.600 24.800zM18 33.200C13.500 29.800 8.500 28.600 4.500 28.400C.5 28-1 24 1.500 21.500C4 19.300 8 20.800 11 23.600C14 26.400 16.500 30 18 33.200zM30.400 33.200C34.500 29.800 39.500 28.600 43.800 28.400C47.800 28 49.300 24 46.800 21.500C44.300 19.300 40.300 20.800 37.300 23.600C34.300 26.400 31.800 30 30.400 33.200z" fill="#fff"/></svg></div><div class="tt" style="letter-spacing:0.69px">Lead Messages</div></div>
<div class="m" style="height:631px"><div class="av" style="background:linear-gradient(135deg,#c2e2aa 10%,#80bc68 90%)"><b>L</b><div class="bd" style="background:#5cc866"><svg width="20" height="20" viewBox="0 0 20 20"><path d="M10 3.800a6.200 6.200 0 1 1-3 11.600l-3 .8.800-2.900A6.200 6.200 0 0 1 10 3.800z" fill="none" stroke="#fff" stroke-width="1.500"/><text x="10.100" y="13.300" font-family="Liberation Sans, sans-serif" font-size="8.500" font-weight="bold" fill="#fff" text-anchor="middle">B</text></svg></div></div><div class="a2"><svg width="48" height="48" viewBox="0 0 48 48"><rect width="48" height="48" fill="#345a8e"/><path d="M6.300 26.200l2.800-3.400 2.800 3.400z" fill="#fff"/><text x="28.300" y="27.500" font-family="Liberation Sans, sans-serif" font-size="11" fill="#fff" stroke="#fff" stroke-width=".5" text-anchor="middle" letter-spacing=".9">acme</text></svg></div><div class="tm">3hrs</div><div class="nm"><span style="letter-spacing:1.65px;">+491705600168</span></div><div class="sb"><span style="letter-spacing:0.55px;left:0px">Luis</span><span style="left:56px;top:1.900px;font-size:17px">•</span><svg style="left:74.5px;top:0px" width="20" height="23" viewBox="0 0 20 23"><path d="M4.9 10V6.2a5.1 5.1 0 0 1 10.2 0V10" fill="none" stroke="#5c5c6b" stroke-width="2.4"/><rect x=".4" y="9.2" width="19.2" height="13.4" rx="3" fill="#5c5c6b"/><circle cx="10" cy="14.3" r="1.7" fill="#fff"/><rect x="9.1" y="14.5" width="1.8" height="4.4" fill="#fff"/></svg><span style="letter-spacing:0.47px;left:104px">Message</span></div><div class="tx" style="line-height:40.500px"><span style="letter-spacing:0.22px;">Yeah, actually. My laptop is slow. Wondering</span><br><span style="letter-spacing:0.35px;">whether I should replace it</span></div><div class="st"><span style="letter-spacing:0.4px">Sent to </span><a style="letter-spacing:0.31px">Sprinklr Test</a></div><div class="pr"><div class="rw"><svg width="24" height="24" viewBox="0 0 24 24" fill="none" stroke="#5c5c6b" stroke-width="2" stroke-linecap="round" stroke-linejoin="round"><path d="M14.3 1.6A10.7 10.7 0 1 0 22.3 15.2"/><path d="M13.2 8.9l3.3 3 6.8-7"/></svg><span style="letter-spacing:0.93px;">New</span><svg class="r" width="24" height="24" viewBox="0 0 24 24" fill="none" stroke="#5c5c6b" stroke-width="2" stroke-linecap="round" stroke-linejoin="round"><g transform="translate(0 -.8)"><circle cx="11.1" cy="4.6" r="2.9" stroke-width="1.8"/><path d="M4.2 24.2v-6.600a6.800 6.400 0 0 1 13.600-1.900"/><path d="M20.300 20.400h-9M14 16.300l-3 4.100 3 4"/></g></svg><span class="r g" style="letter-spacing:0.68px;">Not Assigned</span></div><div class="rw"><svg width="24" height="24" viewBox="0 0 24 24" fill="none" stroke="#5c5c6b" stroke-width="2" stroke-linecap="round" stroke-linejoin="round"><path d="M6.8 .4h11.1M3.3 3.8h17.6" stroke-width="1.6"/><path d="M5.3 6.6h13.4a3 3 0 0 1 3 3v13.6l-6.6-3.6H5.3a3 3 0 0 1-3-3V9.6a3 3 0 0 1 3-3z"/></svg><span style="letter-spacing:-0.16px;">1 Queue</span><svg class="r" width="24" height="24" viewBox="0 0 24 24" fill="none" stroke="#5c5c6b" stroke-width="2" stroke-linecap="round" stroke-linejoin="round"><circle cx="12" cy="12" r="10.8" stroke="#c32652"/><circle cx="8.2" cy="9.6" r="1.5" fill="#c32652" stroke="none"/><circle cx="15.8" cy="9.6" r="1.5" fill="#c32652" stroke="none"/><path d="M7.4 17.2a5 4.4 0 0 1 9.2 0" stroke="#c32652" stroke-width="1.8"/></svg><span class="r" style="letter-spacing:0.68px;">Negative</span></div><div class="rw"><svg width="24" height="24" viewBox="0 0 24 24" fill="none" stroke="#5c5c6b" stroke-width="2" stroke-linecap="round" stroke-linejoin="round"><rect x="1" y="9.6" width="22" height="13.4" rx="3"/><path d="M5.2 12.6l6.8 4.8 6.8-4.8"/><path d="M1.6 11L4.6 3a2.6 2.6 0 0 1 2.4-1.7h10a2.6 2.6 0 0 1 2.4 1.7l3 8"/><path d="M4.3 4.6h15.4M3.2 7.3h17.6" stroke-width="1.7"/></svg><span style="letter-spacing:0.32px;">Leads</span><svg class="r" width="24" height="24" viewBox="0 0 24 24" fill="none" stroke="#5c5c6b" stroke-width="2" stroke-linecap="round" stroke-linejoin="round"><path d="M23.400.7L2.800 8.900l7.800 5 4.700 8.100z" stroke-width="1.8" stroke-linejoin="miter"/><path d="M8 12.7L.6 19.8l3.8 4.2 7.8-7.9" stroke-width="1.8" stroke-linejoin="miter"/></svg><span class="r" style="letter-spacing:0.25px;">Engageable</span></div><div class="rw"><svg width="24" height="24" viewBox="0 0 24 24" fill="none" stroke="#5c5c6b" stroke-width="2" stroke-linecap="round" stroke-linejoin="round"><rect x="1" y="3.6" width="22" height="17" rx="3.4"/><path d="M5.2 9.4l6.8 4.9 6.8-4.9"/></svg><span style="letter-spacing:0.34px;">Very Low, English, Owned Account, Yes, Engageabl...</span></div><div class="rw"><svg width="24" height="24" viewBox="0 0 24 24" fill="none" stroke="#5c5c6b" stroke-width="2" stroke-linecap="round" stroke-linejoin="round"><circle cx="12" cy="12" r="10.9"/><circle cx="12" cy="9" r="3"/><path d="M4.9 20a8 7.4 0 0 1 14.2 0"/></svg><span style="letter-spacing:0.43px;">Luis, Mosteiro, luis.fernandez@sprinklr.com, +4917...</span></div><div class="rw" style="margin-top:2px"><svg width="24" height="24" viewBox="0 0 24 24" fill="none" stroke="#5c5c6b" stroke-width="2" stroke-linecap="round" stroke-linejoin="round"><rect x="1.8" y="1.6" width="20.4" height="20.8" rx="2.6" fill="#62626f" stroke="none"/><path d="M15.6 9a4.6 4.6 0 1 0 0 6" stroke="#fff" stroke-width="2.5"/></svg><span style="letter-spacing:1.74px;">443987</span></div></div><div class="vc">View Conversation</div><div class="dt"><i></i></div></div>
<div class="m" style="height:544px"><div class="av" style="background:linear-gradient(160deg,#ee9468 10%,#e86e90 90%)"><svg width="56" height="56" viewBox="0 0 56 56"><circle cx="28" cy="19.600" r="5.900" fill="#0a0a14"/><path d="M14.200 41.700a13.800 13.500 0 0 1 27.600 0z" fill="#0a0a14"/></svg><div class="bd" style="background:#58c74e"><svg width="20" height="20" viewBox="0 0 20 20"><path d="M6.300 3.600c.6-.5 1.400-.4 1.800.2l1.300 1.900c.4.500.3 1.200-.1 1.700l-.8.900c1 2 2.300 3.300 4.200 4.300l1-.8c.5-.4 1.200-.5 1.700-.1l1.900 1.300c.6.400.7 1.300.2 1.800l-1 1.100c-.7.700-1.700 1-2.700.7-4.200-1.300-7.300-4.500-8.600-8.600-.3-1 0-2 .7-2.700z" fill="#fff" transform="translate(-1.300 -.6)"/></svg></div></div><div class="a2" style="background:linear-gradient(135deg,#f0dc58 10%,#3e9a74 90%)"><b>D</b></div><div class="tm">4hrs</div><div class="nm"><span style="letter-spacing:1.51px;">+919427486841</span></div><div class="sb" style="margin-top:0px"><span style="letter-spacing:0.89px;left:0px">+919427486841</span><span style="left:193.9px;top:1.900px;font-size:17px">•</span><svg style="left:210.5px;top:1px" width="24" height="24" viewBox="0 0 24 24"><circle cx="12" cy="12" r="10.900" fill="#fff" stroke="#5c5c6b" stroke-width="2.100"/><path d="M2.300 8.600L4.700 4.400 8.400 2.400l3.400.4-1 3-2 2.800-2.300 1-1.800 1.400zM7.900 12.300l4.200.5 1.900 2.300-2.400 3.800-1.400 2.500-1.400-4.400zM16.800 10.900l1.800-2.300 2.800.9 1.500 1.900-1.500 2.800-2.300-1.900zM17.300 5.300l2.300 1.100-1 1.500z" fill="#5c5c6b" stroke="#5c5c6b" stroke-width=".8" stroke-linejoin="round"/></svg><span style="letter-spacing:0.52px;left:242.6px">Call Transcript</span></div><div class="bb"><div class="r">port</div></div><div class="pr"><div class="rw"><svg width="24" height="24" viewBox="0 0 24 24" fill="none" stroke="#5c5c6b" stroke-width="2" stroke-linecap="round" stroke-linejoin="round"><path d="M14.3 1.6A10.7 10.7 0 1 0 22.3 15.2"/><path d="M13.2 8.9l3.3 3 6.8-7"/></svg><span class="g" style="letter-spacing:0.74px;">Not Set</span><svg class="r" width="24" height="24" viewBox="0 0 24 24" fill="none" stroke="#5c5c6b" stroke-width="2" stroke-linecap="round" stroke-linejoin="round"><g transform="translate(0 -.8)"><circle cx="11.1" cy="4.6" r="2.9" stroke-width="1.8"/><path d="M4.2 24.2v-6.600a6.800 6.400 0 0 1 13.600-1.900"/><path d="M20.300 20.400h-9M14 16.300l-3 4.100 3 4"/></g></svg><span class="r g" style="letter-spacing:0.68px;">Not Assigned</span></div><div class="rw"><svg width="24" height="24" viewBox="0 0 24 24" fill="none" stroke="#5c5c6b" stroke-width="2" stroke-linecap="round" stroke-linejoin="round"><path d="M6.8 .4h11.1M3.3 3.8h17.6" stroke-width="1.6"/><path d="M5.3 6.6h13.4a3 3 0 0 1 3 3v13.6l-6.6-3.6H5.3a3 3 0 0 1-3-3V9.6a3 3 0 0 1 3-3z"/></svg><span class="g" style="letter-spacing:0.28px;">No Queues</span><svg class="r" width="24" height="24" viewBox="0 0 24 24" fill="none" stroke="#5c5c6b" stroke-width="2" stroke-linecap="round" stroke-linejoin="round"><circle cx="12" cy="12" r="10.8"/><path d="M6 10.6a2.4 2 0 0 1 4.6 0M13.4 10.6a2.4 2 0 0 1 4.6 0M6 15.3h12" stroke-width="1.7"/></svg><span class="r" style="letter-spacing:0.72px;">Neutral</span></div><div class="rw"><svg width="24" height="24" viewBox="0 0 24 24" fill="none" stroke="#5c5c6b" stroke-width="2" stroke-linecap="round" stroke-linejoin="round"><rect x="1" y="9.6" width="22" height="13.4" rx="3"/><path d="M5.2 12.6l6.8 4.8 6.8-4.8"/><path d="M1.6 11L4.6 3a2.6 2.6 0 0 1 2.4-1.7h10a2.6 2.6 0 0 1 2.4 1.7l3 8"/><path d="M4.3 4.6h15.4M3.2 7.3h17.6" stroke-width="1.7"/></svg><span style="letter-spacing:0.32px;">Leads</span><svg class="r" width="24" height="24" viewBox="0 0 24 24" fill="none" stroke="#5c5c6b" stroke-width="2" stroke-linecap="round" stroke-linejoin="round"><path d="M23.400.7L2.800 8.900l7.800 5 4.700 8.100z" stroke-width="1.8" stroke-linejoin="miter"/><path d="M8 12.7L.6 19.8l3.8 4.2 7.8-7.9" stroke-width="1.8" stroke-linejoin="miter"/></svg><span class="r" style="letter-spacing:0.25px;">Engageable</span></div><div class="rw"><svg width="24" height="24" viewBox="0 0 24 24" fill="none" stroke="#5c5c6b" stroke-width="2" stroke-linecap="round" stroke-linejoin="round"><rect x="1" y="3.6" width="22" height="17" rx="3.4"/><path d="M5.2 9.4l6.8 4.9 6.8-4.9"/></svg><span style="letter-spacing:0.69px;">Owned Account, port, yes</span></div><div class="rw"><svg width="24" height="24" viewBox="0 0 24 24" fill="none" stroke="#5c5c6b" stroke-width="2" stroke-linecap="round" stroke-linejoin="round"><circle cx="12" cy="12" r="10.9"/><circle cx="12" cy="9" r="3"/><path d="M4.9 20a8 7.4 0 0 1 14.2 0"/></svg><span class="g" style="letter-spacing:0.53px;">Set Profile Properties</span></div><div class="rw" style="margin-top:2px"><svg width="24" height="24" viewBox="0 0 24 24" fill="none" stroke="#5c5c6b" stroke-width="2" stroke-linecap="round" stroke-linejoin="round"><rect x="1.8" y="1.6" width="20.4" height="20.8" rx="2.6" fill="#62626f" stroke="none"/><path d="M15.6 9a4.6 4.6 0 1 0 0 6" stroke="#fff" stroke-width="2.5"/></svg><span style="letter-spacing:1.66px;">443957</span></div></div><div class="dt"><i></i></div></div>
</div>
<div class="col" style="left:2432px"><div class="ch"><div class="ic"><svg style="position:absolute;left:7.300px;top:9.800px" width="25.4" height="20.2" viewBox="0 0 48.4 38.5"><path d="M23.7 38.5C20.5 27 23 9 33 2.500C38.500 -1 44.500 2.500 43 8.200C42 12 36.500 13.500 32 19C28 24 24.800 31 23.700 38.500zM18.600 24.800C18 16 13 12.500 9.300 10.300C5.500 8.500 4 4 7 2.200C10 .5 13.500 3.500 16 8C18.500 12.800 19.300 19 18.600 24.800zM18 33.200C13.500 29.800 8.500 28.600 4.500 28.400C.5 28-1 24 1.500 21.500C4 19.300 8 20.800 11 23.600C14 26.400 16.500 30 18 33.200zM30.400 33.200C34.500 29.800 39.500 28.600 43.800 28.400C47.800 28 49.300 24 46.800 21.500C44.300 19.300 40.300 20.800 37.300 23.600C34.300 26.400 31.800 30 30.400 33.200z" fill="#fff"/></svg></div><div class="tt" style="letter-spacing:0.94px">Complaint Messages</div></div>
<div class="m" style="height:604px"><div class="av" style="background:linear-gradient(135deg,#f7d29c 10%,#eea650 90%)"><b>X</b><div class="bd" style="background:#6fd0f5"><svg width="20" height="20" viewBox="0 0 20 20"><path d="M10 4.300c3.500 0 6.200 2.300 6.200 5.100s-2.700 5.100-6.200 5.100c-.7 0-1.400-.1-2-.3l-3 1.400.8-2.700c-1.200-.9-2-2.100-2-3.500 0-2.800 2.700-5.100 6.200-5.100z" fill="#fff"/><g fill="#6fd0f5"><circle cx="7.300" cy="9.500" r=".9"/><circle cx="10" cy="9.500" r=".9"/><circle cx="12.700" cy="9.500" r=".9"/></g></svg></div></div><div class="a2" style="background:linear-gradient(160deg,#8cc270 10%,#5cbee6 90%)"><b>C</b></div><div class="tm">3hrs</div><div class="nm"><span style="letter-spacing:-0.41px;">x y</span></div><div class="sb"><span style="letter-spacing:0.58px;left:0px">@18443</span><span style="left:103.2px;top:1.900px;font-size:17px">•</span><svg style="left:122.3px;top:0px" width="20" height="23" viewBox="0 0 20 23"><path d="M4.9 10V6.2a5.1 5.1 0 0 1 10.2 0V10" fill="none" stroke="#5c5c6b" stroke-width="2.4"/><rect x=".4" y="9.2" width="19.2" height="13.4" rx="3" fill="#5c5c6b"/><circle cx="10" cy="14.3" r="1.7" fill="#fff"/><rect x="9.1" y="14.5" width="1.8" height="4.4" fill="#fff"/></svg><span style="letter-spacing:0.37px;left:151.5px">Live Chat</span></div><div class="bb"><svg class="abs" style="left:0;top:0" width="20" height="24" viewBox="0 0 20 24"><path d="M1 24V1.300L16.500 17.500" fill="#f8f8fa" stroke="#e3e4e7" stroke-width="2" stroke-linejoin="round"/></svg><div class="h">help</div><div class="abs" style="left:2px;top:16.500px;width:12.500px;height:3px;background:#f8f8fa"></div></div><div class="pr"><div class="rw"><svg width="24" height="24" viewBox="0 0 24 24" fill="none" stroke="#5c5c6b" stroke-width="2" stroke-linecap="round" stroke-linejoin="round"><path d="M14.3 1.6A10.7 10.7 0 1 0 22.3 15.2"/><path d="M13.2 8.9l3.3 3 6.8-7"/></svg><span style="letter-spacing:0.93px;">New</span><svg class="r" width="24" height="24" viewBox="0 0 24 24" fill="none" stroke="#5c5c6b" stroke-width="2" stroke-linecap="round" stroke-linejoin="round"><g transform="translate(0 -.8)"><circle cx="11.1" cy="4.6" r="2.9" stroke-width="1.8"/><path d="M4.2 24.2v-6.600a6.800 6.400 0 0 1 13.600-1.900"/><path d="M20.300 20.400h-9M14 16.300l-3 4.100 3 4"/></g></svg><span class="r g" style="letter-spacing:0.68px;">Not Assigned</span></div><div class="rw"><svg width="24" height="24" viewBox="0 0 24 24" fill="none" stroke="#5c5c6b" stroke-width="2" stroke-linecap="round" stroke-linejoin="round"><path d="M6.8 .4h11.1M3.3 3.8h17.6" stroke-width="1.6"/><path d="M5.3 6.6h13.4a3 3 0 0 1 3 3v13.6l-6.6-3.6H5.3a3 3 0 0 1-3-3V9.6a3 3 0 0 1 3-3z"/></svg><span class="g" style="letter-spacing:0.28px;">No Queues</span><svg class="r" width="24" height="24" viewBox="0 0 24 24" fill="none" stroke="#5c5c6b" stroke-width="2" stroke-linecap="round" stroke-linejoin="round"><circle cx="12" cy="12" r="10.8"/><path d="M6 10.6a2.4 2 0 0 1 4.6 0M13.4 10.6a2.4 2 0 0 1 4.6 0M6 15.3h12" stroke-width="1.7"/></svg><span class="r" style="letter-spacing:0.72px;">Neutral</span></div><div class="rw"><svg width="24" height="24" viewBox="0 0 24 24" fill="none" stroke="#5c5c6b" stroke-width="2" stroke-linecap="round" stroke-linejoin="round"><rect x="1" y="9.6" width="22" height="13.4" rx="3"/><path d="M5.2 12.6l6.8 4.8 6.8-4.8"/><path d="M1.6 11L4.6 3a2.6 2.6 0 0 1 2.4-1.7h10a2.6 2.6 0 0 1 2.4 1.7l3 8"/><path d="M4.3 4.6h15.4M3.2 7.3h17.6" stroke-width="1.7"/></svg><span style="letter-spacing:0.68px;">Complaint</span><svg class="r" width="24" height="24" viewBox="0 0 24 24" fill="none" stroke="#5c5c6b" stroke-width="2" stroke-linecap="round" stroke-linejoin="round"><path d="M23.400.7L2.800 8.900l7.800 5 4.700 8.100z" stroke-width="1.8" stroke-linejoin="miter"/><path d="M8 12.7L.6 19.8l3.8 4.2 7.8-7.9" stroke-width="1.8" stroke-linejoin="miter"/></svg><span class="r" style="letter-spacing:0.25px;">Engageable</span></div><div class="rw"><svg width="24" height="24" viewBox="0 0 24 24" fill="none" stroke="#5c5c6b" stroke-width="2" stroke-linecap="round" stroke-linejoin="round"><rect x="1" y="3.6" width="22" height="17" rx="3.4"/><path d="M5.2 9.4l6.8 4.9 6.8-4.9"/></svg><span style="letter-spacing:0.34px;">Very Low, English, Owned Account, Yes, Engageabl...</span></div><div class="rw"><svg width="24" height="24" viewBox="0 0 24 24" fill="none" stroke="#5c5c6b" stroke-width="2" stroke-linecap="round" stroke-linejoin="round"><circle cx="12" cy="12" r="10.9"/><circle cx="12" cy="9" r="3"/><path d="M4.9 20a8 7.4 0 0 1 14.2 0"/></svg><span style="letter-spacing:0.39px;">z@gmail.com, 4123456789, Bot Rule Enter, 41234...</span></div><div class="rw" style="margin-top:2px"><svg width="24" height="24" viewBox="0 0 24 24" fill="none" stroke="#5c5c6b" stroke-width="2" stroke-linecap="round" stroke-linejoin="round"><rect x="1.8" y="1.6" width="20.4" height="20.8" rx="2.6" fill="#62626f" stroke="none"/><path d="M15.6 9a4.6 4.6 0 1 0 0 6" stroke="#fff" stroke-width="2.5"/></svg><span style="letter-spacing:1.82px;">443993</span></div></div><div class="vc">View Conversation</div><div class="dt"><i></i></div></div>
<div class="m" style="height:560px"><div class="av" style="background:#1c1b19"><svg width="56" height="56" viewBox="0 0 56 56"><clipPath id="skc"><circle cx="28" cy="28" r="28"/></clipPath><g clip-path="url(#skc)" fill="none" stroke-linecap="round" stroke-linejoin="round"><rect width="56" height="56" fill="#1e1d1a"/><path d="M9.800 7.300L23.900 1l17 4 5.700 13.600-2.300 17-5.600 11.300-9.100 8.500-10.200-2.800-5.700-14.200-1.100-14.100z" fill="#b9b7b2"/><path d="M16.600 22l9.600-9.100 9.100 4 1.100 13-2.300 11.400-6.800 10.200-5.600-4.600-2.300-11.300-4.500-6.800z" fill="#f3f2ef"/><path d="M21.700 10.100L12.600 26.500" stroke="#1e1d1a" stroke-width="4.200"/><path d="M40.900 9l1.100 24.300M36 44l3-9" stroke="#1e1d1a" stroke-width="2.600"/><path d="M23.900 16.900l9.100 2.800 4.500 1.200" stroke="#1e1d1a" stroke-width="3"/><path d="M25 22l4.600 2.300M32 23.500l4 1" stroke="#2a2926" stroke-width="2.400"/><path d="M26.200 31.100l-2.300 4.500 4.600-.6M23.900 40.100l6.800 1.200" stroke="#3a3936" stroke-width="1.600"/><path d="M26.200 43l3.400 3.300" stroke="#1e1d1a" stroke-width="3.600"/><path d="M15 32l3 14 5 8M30 4l6 3 3 6M14 14l6-8" stroke="#55534f" stroke-width="1.800"/><path d="M19 8l10-4M38 20l3 12-4 12M18 38l2 10" stroke="#ecebe8" stroke-width="1.600"/></g></svg><div class="bd" style="background:#5da9e8"><svg width="20" height="20" viewBox="0 0 20 20"><path d="M15.800 6.500c-.4.200-.9.300-1.400.4.500-.3.900-.8 1.100-1.300-.5.300-1 .5-1.500.6a2.400 2.400 0 0 0-4.100 2.200c-2-.1-3.800-1.100-5-2.500-.6 1.100-.3 2.500.8 3.200-.4 0-.8-.1-1.100-.3 0 1.200.8 2.200 1.900 2.400-.4.100-.7.100-1.100 0 .3 1 1.200 1.700 2.300 1.700-1 .8-2.300 1.100-3.500 1 1.100.7 2.400 1.100 3.700 1.100 4.500 0 7-3.800 6.800-7.200.4-.4.800-.8 1.100-1.300z" fill="#fff"/></svg></div></div><div class="a2"><svg width="48" height="48" viewBox="0 0 48 48"><rect width="48" height="48" fill="#345a8e"/><path d="M6.300 26.200l2.800-3.400 2.800 3.400z" fill="#fff"/><text x="28.300" y="27.500" font-family="Liberation Sans, sans-serif" font-size="11" fill="#fff" stroke="#fff" stroke-width=".5" text-anchor="middle" letter-spacing=".9">acme</text></svg></div><div class="tm">4hrs</div><div class="nm"><span style="letter-spacing:-0.69px;">RandomBluez</span></div><div class="sb"><span style="letter-spacing:-0.03px;left:0px">@RandomBluez</span><span style="left:184.7px;top:1.900px;font-size:17px">•</span><svg style="left:200.5px;top:1px" width="24" height="24" viewBox="0 0 24 24"><circle cx="12" cy="12" r="10.900" fill="#fff" stroke="#5c5c6b" stroke-width="2.100"/><path d="M2.300 8.600L4.700 4.400 8.400 2.400l3.400.4-1 3-2 2.800-2.300 1-1.800 1.400zM7.900 12.300l4.200.5 1.900 2.300-2.400 3.800-1.400 2.500-1.400-4.400zM16.800 10.900l1.800-2.300 2.800.9 1.500 1.900-1.500 2.800-2.300-1.900zM17.300 5.300l2.300 1.100-1 1.500z" fill="#5c5c6b" stroke="#5c5c6b" stroke-width=".8" stroke-linejoin="round"/></svg><span style="letter-spacing:0.83px;left:233px">Mention</span></div><div class="tx"><a><span style="letter-spacing:-0.18px;">@acme_co_</span></a> extremely BAD</div><div class="pr"><div class="rw"><svg width="24" height="24" viewBox="0 0 24 24" fill="none" stroke="#5c5c6b" stroke-width="2" stroke-linecap="round" stroke-linejoin="round"><path d="M14.3 1.6A10.7 10.7 0 1 0 22.3 15.2"/><path d="M13.2 8.9l3.3 3 6.8-7"/></svg><span style="letter-spacing:0.93px;">New</span><svg class="r" width="24" height="24" viewBox="0 0 24 24" fill="none" stroke="#5c5c6b" stroke-width="2" stroke-linecap="round" stroke-linejoin="round"><g transform="translate(0 -.8)"><circle cx="11.1" cy="4.6" r="2.9" stroke-width="1.8"/><path d="M4.2 24.2v-6.600a6.800 6.400 0 0 1 13.600-1.900"/><path d="M20.300 20.400h-9M14 16.300l-3 4.100 3 4"/></g></svg><span class="r g" style="letter-spacing:0.68px;">Not Assigned</span></div><div class="rw"><svg width="24" height="24" viewBox="0 0 24 24" fill="none" stroke="#5c5c6b" stroke-width="2" stroke-linecap="round" stroke-linejoin="round"><path d="M6.8 .4h11.1M3.3 3.8h17.6" stroke-width="1.6"/><path d="M5.3 6.6h13.4a3 3 0 0 1 3 3v13.6l-6.6-3.6H5.3a3 3 0 0 1-3-3V9.6a3 3 0 0 1 3-3z"/></svg><span style="letter-spacing:0.36px;">2 Queues</span><svg class="r" width="24" height="24" viewBox="0 0 24 24" fill="none" stroke="#5c5c6b" stroke-width="2" stroke-linecap="round" stroke-linejoin="round"><circle cx="12" cy="12" r="10.8" stroke="#c32652"/><circle cx="8.2" cy="9.6" r="1.5" fill="#c32652" stroke="none"/><circle cx="15.8" cy="9.6" r="1.5" fill="#c32652" stroke="none"/><path d="M7.4 17.2a5 4.4 0 0 1 9.2 0" stroke="#c32652" stroke-width="1.8"/></svg><span class="r" style="letter-spacing:0.68px;">Negative</span></div><div class="rw"><svg width="24" height="24" viewBox="0 0 24 24" fill="none" stroke="#5c5c6b" stroke-width="2" stroke-linecap="round" stroke-linejoin="round"><rect x="1" y="9.6" width="22" height="13.4" rx="3"/><path d="M5.2 12.6l6.8 4.8 6.8-4.8"/><path d="M1.6 11L4.6 3a2.6 2.6 0 0 1 2.4-1.7h10a2.6 2.6 0 0 1 2.4 1.7l3 8"/><path d="M4.3 4.6h15.4M3.2 7.3h17.6" stroke-width="1.7"/></svg><span style="letter-spacing:0.68px;">Complaint</span><svg class="r" width="24" height="24" viewBox="0 0 24 24" fill="none" stroke="#5c5c6b" stroke-width="2" stroke-linecap="round" stroke-linejoin="round"><path d="M23.400.7L2.800 8.900l7.800 5 4.700 8.100z" stroke-width="1.8" stroke-linejoin="miter"/><path d="M8 12.7L.6 19.8l3.8 4.2 7.8-7.9" stroke-width="1.8" stroke-linejoin="miter"/></svg><span class="r" style="letter-spacing:0.25px;">Engageable</span></div><div class="rw"><svg width="24" height="24" viewBox="0 0 24 24" fill="none" stroke="#5c5c6b" stroke-width="2" stroke-linecap="round" stroke-linejoin="round"><rect x="1" y="3.6" width="22" height="17" rx="3.4"/><path d="M5.2 9.4l6.8 4.9 6.8-4.9"/></svg><span style="letter-spacing:0.23px">High, English, Owned Account, Yes...</span></div><div class="rw"><svg width="24" height="24" viewBox="0 0 24 24" fill="none" stroke="#5c5c6b" stroke-width="2" stroke-linecap="round" stroke-linejoin="round"><circle cx="12" cy="12" r="10.9"/><circle cx="12" cy="9" r="3"/><path d="M4.9 20a8 7.4 0 0 1 14.2 0"/></svg><span style="letter-spacing:0.4px">Amit, Aich, amit.aich@sprinklr.com...</span></div><div class="rw" style="margin-top:2px"><svg width="24" height="24" viewBox="0 0 24 24" fill="none" stroke="#5c5c6b" stroke-width="2" stroke-linecap="round" stroke-linejoin="round"><rect x="1.8" y="1.6" width="20.4" height="20.8" rx="2.6" fill="#62626f" stroke="none"/><path d="M15.6 9a4.6 4.6 0 1 0 0 6" stroke="#fff" stroke-width="2.5"/></svg><span style="letter-spacing:1.82px;">443982</span></div></div><div class="vc">View Conversation</div><div class="dt"><i></i></div></div>
</div>
<div id="help"><span>?</span></div>
</body></html>
